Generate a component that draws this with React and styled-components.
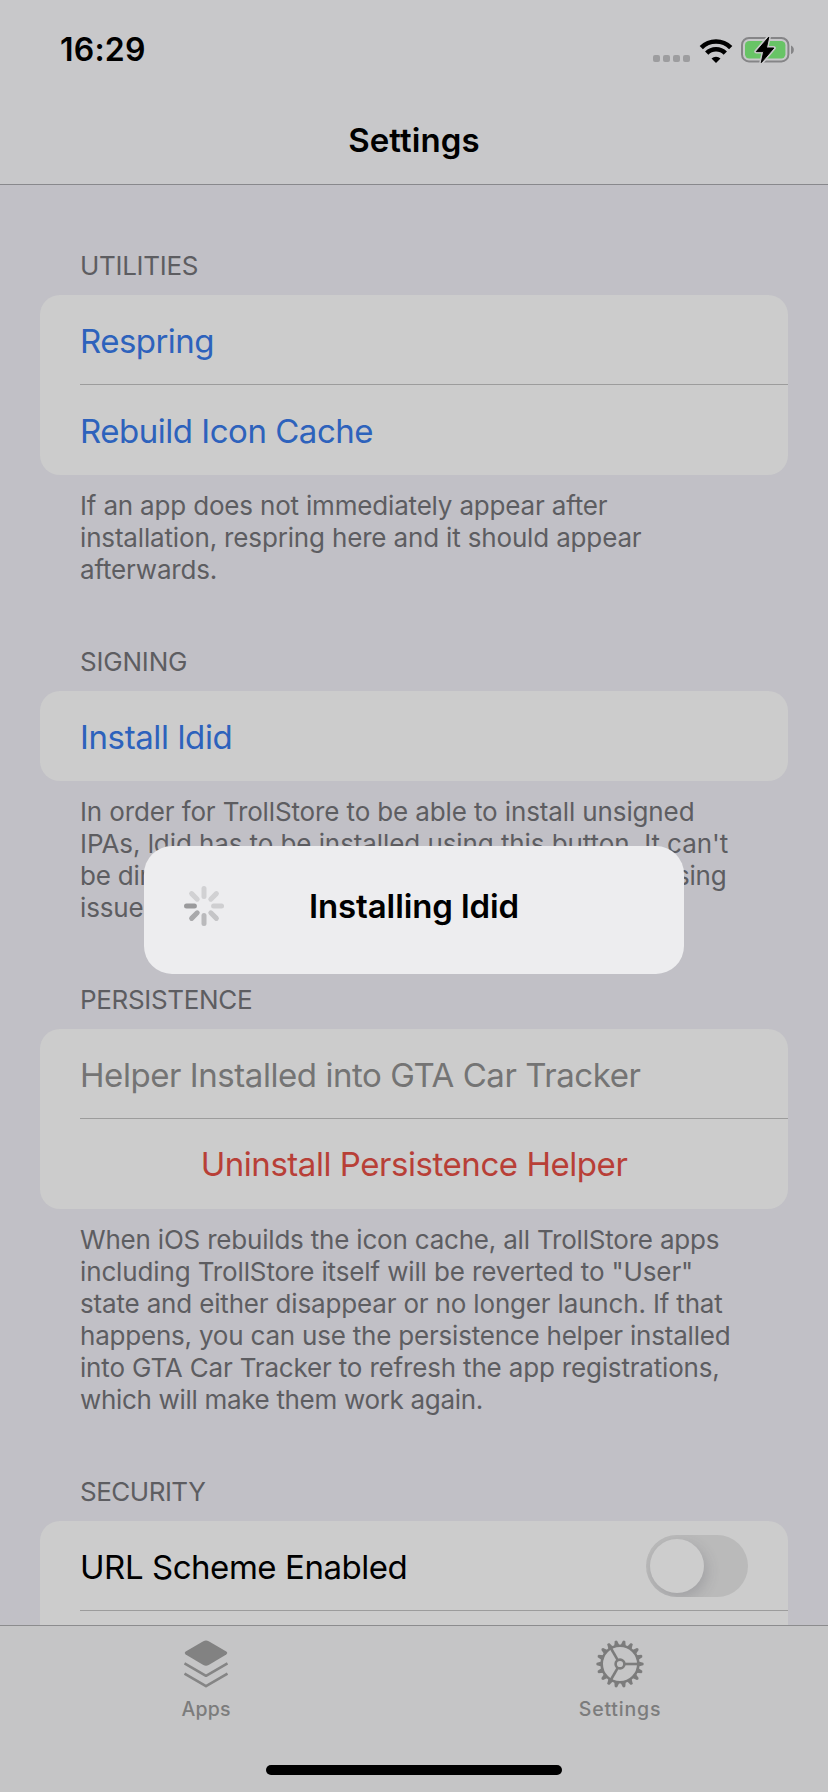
import React from 'react';
import styled, { createGlobalStyle } from 'styled-components';

const Global = createGlobalStyle`
  body { margin: 0; background: #c1c0c6; }
  * { box-sizing: border-box; }
`;

const Screen = styled.div`
  position: relative;
  width: 828px;
  height: 1792px;
  display: flex;
  flex-direction: column;
  overflow: hidden;
  background: #c1c0c6;
  font-family: Inter, "Liberation Sans", sans-serif;
`;

const Header = styled.header`
  flex: none;
  height: 185px;
  background: #c8c8ca;
  border-bottom: 1px solid #88888c;
`;

const StatusBar = styled.div`
  height: 100px;
  padding: 30px 33px 0 60px;
  display: flex;
  justify-content: space-between;
  align-items: flex-start;
`;

const Clock = styled.time`
  font-size: 32px;
  line-height: 40px;
  font-weight: 600;
  letter-spacing: 0.2px;
  color: #000;
`;

const StatusIcons = styled.div`
  display: flex;
  align-items: flex-end;
  height: 34px;
`;

const SignalDots = styled.div`
  display: flex;
  gap: 3px;
  margin: 0 9px 2px 0;
`;

const Dot = styled.i`
  width: 7px;
  height: 7px;
  border-radius: 2px;
  background: #9d9d9f;
`;

const Title = styled.h1`
  margin: 0;
  padding-top: 20px;
  text-align: center;
  font-size: 33px;
  line-height: 40px;
  font-weight: 600;
  letter-spacing: 0.1px;
  color: #000;
`;

const Content = styled.main`
  flex: 1;
  min-height: 0;
  overflow: hidden;
  padding: 5px 40px 0;
`;

const SectionTitle = styled.h2`
  margin: 0;
  padding: 60px 40px 13px;
  font-size: 26px;
  line-height: 32px;
  font-weight: 400;
  letter-spacing: ${p => p.$track}px;
  color: #5d5d61;
`;

const Card = styled.div`
  border-radius: 20px;
  background: #cccccc;
  padding-left: 40px;
`;

const Row = styled.div`
  height: 90px;
  padding: ${p => (p.$center ? 0 : 2)}px 40px 0 0;
  display: flex;
  align-items: center;
  justify-content: ${p => (p.$center ? 'center' : 'space-between')};
  font-size: 33px;
  line-height: 40px;
  letter-spacing: ${p => p.$track}px;
  color: ${p => p.$color};
  white-space: nowrap;
  &:not(:last-child) { border-bottom: 1px solid #9c9c9c; }
`;

const Footer = styled.p`
  margin: 0;
  padding: 15px 0 0 40px;
  font-size: 26px;
  line-height: 32px;
  color: #5d5d61;
  white-space: nowrap;
`;

const Line = styled.span`
  display: block;
  letter-spacing: ${p => p.$track}px;
`;

const Toggle = styled.span`
  width: 102px;
  height: 62px;
  margin-top: -1px;
  padding: 4px;
  border-radius: 31px;
  background: #bababa;
  overflow: hidden;
`;

const Knob = styled.span`
  display: block;
  width: 54px;
  height: 54px;
  border-radius: 50%;
  background: #cdcdcd;
  box-shadow: 3px 5px 14px rgba(60, 60, 75, 0.2);
`;

const TabBar = styled.nav`
  flex: none;
  height: 167px;
  display: flex;
  flex-direction: column;
  align-items: center;
  border-top: 1px solid #8c8c8e;
  background: #c5c5c6;
`;

const Tabs = styled.div`
  width: 100%;
  height: 139px;
  display: flex;
`;

const Tab = styled.div`
  flex: 1;
  padding: 13px 2px 0 0;
  display: flex;
  flex-direction: column;
  align-items: center;
  font-size: 19.5px;
  line-height: 24px;
  font-weight: 500;
  letter-spacing: ${p => p.$track}px;
  color: #7c7c7c;
  svg { display: block; margin-bottom: 8px; }
`;

const HomeIndicator = styled.div`
  width: 296px;
  height: 10px;
  border-radius: 5px;
  background: #000;
`;

const Alert = styled.div`
  position: absolute;
  left: 144px;
  top: 846px;
  width: 540px;
  height: 128px;
  border-radius: 28px;
  background: #ededef;
  display: grid;
  grid-template-columns: 80px 1fr 80px;
  align-items: center;
  padding-bottom: 8px;
  svg { display: block; justify-self: end; }
`;

const AlertTitle = styled.strong`
  text-align: center;
  font-size: 33px;
  line-height: 40px;
  font-weight: 600;
  letter-spacing: -0.1px;
  color: #000;
`;

const WifiIcon = styled.svg`
  margin-right: 8px;
`;

const Wifi = () => (
  <WifiIcon width="34" height="26" viewBox="0 0 34 26">
    <g fill="none" stroke="#000" strokeWidth="4.6">
      <path d="M2.3 9.6 A20.8 20.8 0 0 1 31.7 9.6" />
      <path d="M7.7 15.2 A13 13 0 0 1 26.3 15.2" />
    </g>
    <path d="M17 25 L12.5 20.5 A6.4 6.4 0 0 1 21.5 20.5 Z" fill="#000" />
  </WifiIcon>
);

const Battery = () => (
  <svg width="54" height="28" viewBox="0 0 54 28">
    <rect x="1" y="2" width="46.4" height="23.4" rx="7" fill="none" stroke="#858587" strokeWidth="2" />
    <rect x="4" y="5" width="40.4" height="17.4" rx="4.2" fill="#68c466" />
    <path d="M50 9.5 C53.8 10.6 53.8 17 50 18 Z" fill="#858587" />
    <path d="M27.8 1 L15.3 15.6 H22.7 L20.3 26.6 L32.8 12 H25.4 Z" fill="#000" stroke="#c8c8ca" strokeWidth="4" strokeLinejoin="round" />
    <path d="M27.8 1 L15.3 15.6 H22.7 L20.3 26.6 L32.8 12 H25.4 Z" fill="#000" stroke="#000" strokeWidth="1" strokeLinejoin="round" />
  </svg>
);

const Layers = () => (
  <svg width="46" height="50" viewBox="0 0 46 50">
    <path d="M20.3 2.3 Q23 .8 25.7 2.3 L43.3 12.6 Q45.2 14 43.3 15.4 L25.7 26 Q23 27.4 20.3 26 L2.7 15.4 Q.8 14 2.7 12.6 Z" fill="#828282" />
    <g fill="none" stroke="#858585" strokeWidth="2.6" strokeLinejoin="round">
      <path d="M1.5 24.3 L23 36.8 L44.5 24.3" />
      <path d="M1.5 34.6 L23 47.2 L44.5 34.6" />
    </g>
  </svg>
);

const TEETH = Array.from({ length: 18 }, (_, i) => i * 20);

const Gear = () => (
  <svg width="50" height="50" viewBox="-25 -25 50 50">
    <g fill="none" stroke="#7c7c7c" strokeWidth="2.6">
      <circle r="18.3" />
      <circle r="4.4" />
      {[0, 120, 240].map(a => <path key={a} d="M4.5 0 H18.5" transform={`rotate(${a})`} />)}
    </g>
    {TEETH.map(a => (
      <path key={a} d="M18.5 -2.6 L23.2 -1.3 Q24.4 0 23.2 1.3 L18.5 2.6 Z" fill="#7c7c7c" transform={`rotate(${a})`} />
    ))}
  </svg>
);

const BLADES = ['#cfcfd1', '#c5c5c7', '#bababc', '#a9a9ab', '#9a9a9c', '#d1d1d3', '#d1d1d3', '#d1d1d3'];

const Spinner = () => (
  <svg width="40" height="40" viewBox="-20 -20 40 40">
    {BLADES.map((c, i) => (
      <path key={i} d="M9.6 0 H17.5" stroke={c} strokeWidth="5" strokeLinecap="round" transform={`rotate(${i * 45})`} />
    ))}
  </svg>
);

const BLUE = '#2d62bc';
const sections = [
  {
    title: 'UTILITIES', track: -0.31,
    rows: [
      { text: 'Respring', color: BLUE, track: -0.54 },
      { text: 'Rebuild Icon Cache', color: BLUE, track: -0.48 },
    ],
    footer: [
      ['If an app does not immediately appear after', -0.18],
      ['installation, respring here and it should appear', -0.16],
      ['afterwards.', -0.19],
    ],
  },
  {
    title: 'SIGNING', track: -0.2,
    rows: [{ text: 'Install ldid', color: BLUE, track: -0.38 }],
    footer: [
      ['In order for TrollStore to be able to install unsigned', -0.125],
      ["IPAs, ldid has to be installed using this button. It can't", -0.085],
      ['be directly included in TrollStore because of licensing', -0.205],
      ['issues.', -0.17],
    ],
  },
  {
    title: 'PERSISTENCE', track: -0.33,
    rows: [
      { text: 'Helper Installed into GTA Car Tracker', color: '#747474', track: -0.44 },
      { text: 'Uninstall Persistence Helper', color: '#b83f37', track: -0.45, center: true },
    ],
    footer: [
      ['When iOS rebuilds the icon cache, all TrollStore apps', -0.2],
      ['including TrollStore itself will be reverted to "User"', -0.134],
      ['state and either disappear or no longer launch. If that', -0.169],
      ['happens, you can use the persistence helper installed', -0.21],
      ['into GTA Car Tracker to refresh the app registrations,', -0.175],
      ['which will make them work again.', -0.32],
    ],
  },
  {
    title: 'SECURITY', track: -0.5,
    rows: [
      { text: 'URL Scheme Enabled', color: '#000', track: -0.45, toggle: true },
      { text: '', color: '#000', track: 0 },
    ],
  },
];

export default function App() {
  return (
    <Screen>
      <Global />
      <Header>
        <StatusBar>
          <Clock>16:29</Clock>
          <StatusIcons>
            <SignalDots><Dot /><Dot /><Dot /><Dot /></SignalDots>
            <Wifi />
            <Battery />
          </StatusIcons>
        </StatusBar>
        <Title>Settings</Title>
      </Header>
      <Content>
        {sections.map(s => (
          <section key={s.title}>
            <SectionTitle $track={s.track}>{s.title}</SectionTitle>
            <Card>
              {s.rows.map((r, i) => (
                <Row key={i} $color={r.color} $track={r.track} $center={r.center}>
                  <span>{r.text}</span>
                  {r.toggle && <Toggle><Knob /></Toggle>}
                </Row>
              ))}
            </Card>
            {s.footer && (
              <Footer>
                {s.footer.map(([t, track]) => <Line key={t} $track={track}>{t}</Line>)}
              </Footer>
            )}
          </section>
        ))}
      </Content>
      <TabBar>
        <Tabs>
          <Tab $track={0.2}><Layers />Apps</Tab>
          <Tab $track={0.8}><Gear />Settings</Tab>
        </Tabs>
        <HomeIndicator />
      </TabBar>
      <Alert>
        <Spinner />
        <AlertTitle>Installing ldid</AlertTitle>
      </Alert>
    </Screen>
  );
}
